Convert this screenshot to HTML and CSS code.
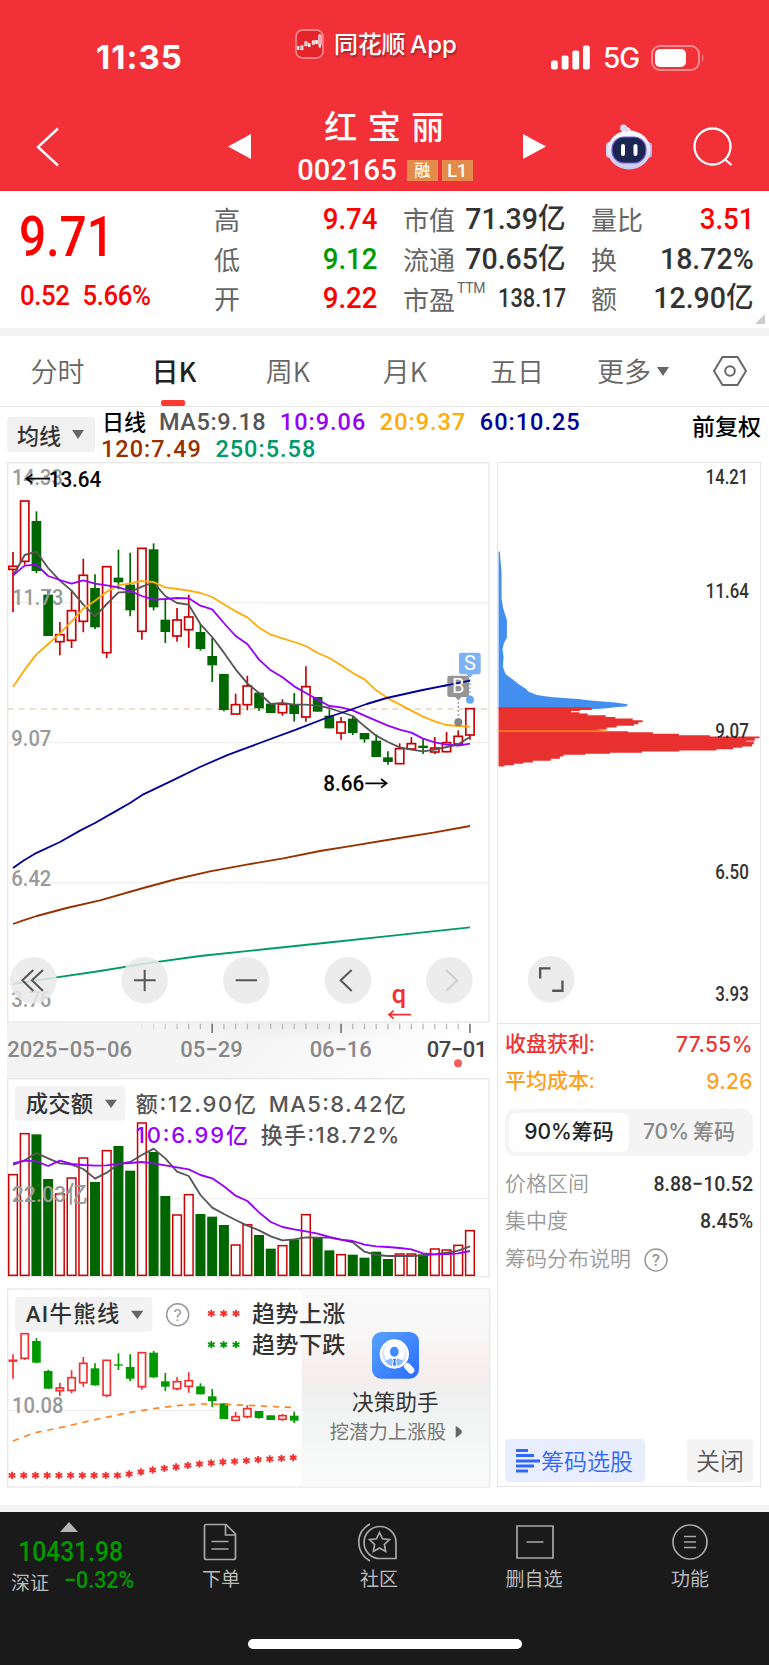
FILE: index.html
```html
<!DOCTYPE html>
<html lang="zh-CN">
<head>
<meta charset="utf-8">
<title>红宝丽 002165</title>
<link rel="stylesheet" href="styles.css">
</head>
<body>
<header class="top">
  <div class="status">
    <span class="clock">11:35</span>
    <div class="brand">
      <svg class="brand-icon" width="29" height="30" viewBox="0 0 29 30"><rect x="1" y="1" width="27" height="28" rx="6.5" fill="#e5232b" stroke="#fa9a9c" stroke-width="1.4"/><path d="M3.2 17v4M24.800 5.500v13" stroke="#fff" stroke-width="2"/><g fill="#e5232b" stroke="#fff" stroke-width="1.200"><rect x="6" y="17" width="1.800" height="3.500"/><rect x="10" y="13" width="1.800" height="3.500"/><rect x="17.500" y="12" width="1.800" height="3"/><rect x="24" y="6" width="2" height="10" rx="1"/></g><path d="M14.200 14v4M21.500 11v4" stroke="#fff" stroke-width="2.400"/></svg>
      <span>同花顺<b>App</b></span>
    </div>
    <div class="signal">
      <svg width="39" height="25" viewBox="0 0 39 25" fill="#fff"><rect y="15.500" width="6.800" height="9" rx="2"/><rect x="10.700" y="10.500" width="6.800" height="14" rx="2"/><rect x="21.400" y="5.500" width="6.800" height="19" rx="2"/><rect x="32" y=".5" width="6.800" height="24" rx="2"/></svg>
      <span>5G</span>
      <svg width="54" height="26" viewBox="0 0 54 26"><rect x="1" y="1" width="47" height="24" rx="8" fill="none" stroke="#f98b8f" stroke-width="2"/><rect x="4" y="4" width="31" height="18" rx="5" fill="#fff"/><path d="M51 9q3 4 0 8z" fill="#f98b8f"/></svg>
    </div>
  </div>
  <nav class="titlebar">
    <svg class="back" width="24" height="40" viewBox="0 0 24 40"><path d="M22 1.500 2 20l20 18.500" fill="none" stroke="#fff" stroke-width="2.400"/></svg>
    <svg class="prev" width="23" height="25" viewBox="0 0 23 25"><path d="M0 12.500 23 0v25z" fill="#fff"/></svg>
    <div class="stock">
      <h1>红宝丽</h1>
      <p><span class="code">002165</span><i>融</i><i>L1</i></p>
    </div>
    <svg class="next" width="23" height="25" viewBox="0 0 23 25"><path d="M23 12.500 0 0v25z" fill="#fff"/></svg>
    <svg class="robot" width="48" height="46" viewBox="0 0 48 46"><defs><linearGradient id="rb" x2="0" y2="1"><stop stop-color="#fff"/><stop offset="1" stop-color="#c6c9f0"/></linearGradient></defs><path d="M25 9q0-5-6-5" fill="none" stroke="#e3e4fa" stroke-width="3"/><circle cx="18.500" cy="4" r="3.400" fill="#d8d9f6"/><rect x="1" y="18" width="8" height="16" rx="4" fill="#d7d5f6"/><rect x="39" y="18" width="8" height="16" rx="4" fill="#b9b5ee"/><ellipse cx="24" cy="26" rx="21.500" ry="19.500" fill="url(#rb)"/><rect x="7" y="13" width="34" height="26" rx="12" fill="#1b2550" stroke="#7d63d8" stroke-width="1.200"/><path d="M18 22v8M30.500 22v8" stroke="#fff" stroke-width="4" stroke-linecap="round"/></svg>
    <svg class="search" width="40" height="40" viewBox="0 0 40 40" fill="none" stroke="#fff" stroke-width="2.300"><circle cx="19.500" cy="19.500" r="18"/><path d="m31.500 32 7 6"/></svg>
  </nav>
</header>

<section class="quote">
  <div class="price"><strong>9.71</strong><p><span>0.52</span><span>5.66%</span></p></div>
  <dl class="c1"><dt>高</dt><dd class="up">9.74</dd><dt>低</dt><dd class="down">9.12</dd><dt>开</dt><dd class="up">9.22</dd></dl>
  <dl class="c2"><dt>市值</dt><dd>71.39<b>亿</b></dd><dt>流通</dt><dd>70.65<b>亿</b></dd><dt class="pe">市盈<sup>TTM</sup></dt><dd class="small">138.17</dd></dl>
  <dl class="c3"><dt>量比</dt><dd class="up">3.51</dd><dt>换</dt><dd>18.72%</dd><dt>额</dt><dd>12.90<b>亿</b></dd></dl>
  <span class="corner"></span>
</section>

<nav class="tabs">
  <span>分时</span><span class="on">日K</span><span>周K</span><span>月K</span><span>五日</span><span class="more">更多<i class="caret"></i></span>
  <svg width="34" height="30" viewBox="0 0 34 30" fill="none" stroke="#666" stroke-width="2"><path d="M9.500 1h15L33 15l-8.500 14h-15L1 15z"/><circle cx="17" cy="15" r="4.800"/></svg>
</nav>

<section class="legend">
  <button class="picker">均线<i class="caret"></i></button>
  <p><span class="k">日线</span><span class="m5">MA5:9.18</span><span class="m10">10:9.06</span><span class="m20">20:9.37</span><span class="m60">60:10.25</span><br><span class="m120">120:7.49</span><span class="m250">250:5.58</span></p>
  <span class="adj">前复权</span>
</section>

<main class="board">
  <div class="left">
    <svg id="kline" width="484" height="561" viewBox="21 20 1452 1683">
      <rect x="23" y="22" width="1444" height="1678" fill="#fff" stroke="#e8e8e8" stroke-width="4"/>
      <path d="M23 442H1467M23 862H1467M23 1282H1467" stroke="#ececec" stroke-width="3"/>
      <path d="M23 761H1467" stroke="#dcc09a" stroke-width="3" stroke-dasharray="18 15"/>
      <g class="candles"></g>
      <g class="lines"></g>
      <g class="axis-label"><text x="36" y="88" textLength="152">14.33</text><text x="36" y="450" textLength="154">11.73</text><text x="34" y="871" textLength="120">9.07</text><text x="34" y="1293" textLength="120">6.42</text><text x="34" y="1655" textLength="120">3.76</text></g>
      <g fill="none" stroke="#000" stroke-width="5"><path d="M150 70H79M97 57 79 70l18 13M1096 984h62M1143 971l17 13-17 13"/></g>
      <g class="peak"><text x="146" y="94" textLength="158">13.64</text><text x="970" y="1008" textLength="123">8.66</text></g>
      <g fill="none" stroke-width="5" stroke-dasharray="5 7"><path d="M1410 660v64" stroke="#8dbdf5"/><path d="M1375 728v64" stroke="#999"/></g>
      <path d="M1383 592h53q6 0 6 6v53q0 6-6 6h-16l-10 10-10-10h-17q-6 0-6-6v-53q0-6 6-6z" fill="#7db2f3"/>
      <path d="M1348 661h53q6 0 6 6v52q0 6-6 6h-16l-10 10-10-10h-17q-6 0-6-6v-52q0-6 6-6z" fill="#8f8f8f" fill-opacity=".95"/>
      <path d="M1330 692 1410 676" stroke="#000099" stroke-width="5"/>
      <circle cx="1410" cy="733" r="12" fill="#67a6f0"/><circle cx="1375" cy="801" r="12" fill="#858585"/>
      <g class="mark"><text x="1410" y="645">S</text><text x="1375" y="713">B</text></g>
      <g class="rounds" fill="#e9e9e9" fill-opacity=".86"><circle cx="100" cy="1575" r="70"/><circle cx="434" cy="1575" r="70"/><circle cx="739" cy="1575" r="70"/><circle cx="1044" cy="1575" r="70"/><circle cx="1348" cy="1575" r="70"/></g>
      <g fill="none" stroke="#555" stroke-width="6"><path d="m100 1544-33 31 33 32M129 1544l-33 31 33 32M402 1575h65M434 1543v65M707 1575h64M1055 1544l-33 31 33 32"/><path d="m1338 1544 34 31-34 32" stroke="#cfcfcf"/></g>
      <text class="q" x="1175" y="1643">q</text><path d="M1233 1678h-66M1181 1666l-14 12 14 12" fill="none" stroke="#f23030" stroke-width="5"/>
    </svg>
    <svg id="dates" width="484" height="55" viewBox="21 728 1452 165">
      <defs><linearGradient id="strip" x2="1" y2=".12"><stop offset="0" stop-color="#f3f3f3"/><stop offset=".55" stop-color="#f5f5f5"/><stop offset="1" stop-color="#fff"/></linearGradient><radialGradient id="shade" cx=".5" cy="0" r=".5"><stop stop-color="#e6e6e6" stop-opacity=".8"/><stop offset="1" stop-color="#f3f3f3" stop-opacity="0"/></radialGradient></defs>
      <rect x="21" y="728" width="1448" height="165" fill="url(#strip)"/><rect x="430" y="728" width="900" height="120" fill="url(#shade)"/>
      <g class="ticks"></g>
      <g class="date"><text x="22" y="830" textLength="374">2025−05−06</text><text x="541" y="830" textLength="187">05−29</text><text x="929" y="830" textLength="186">06−16</text><text class="now" x="1280" y="830" textLength="182">07−01</text></g>
      <circle cx="1374" cy="849" r="12" fill="#f55c5c"/>
    </svg>
    <svg id="volume" width="484" height="200" viewBox="21 9 1452 600">
      <rect x="23" y="11" width="1444" height="594" fill="#fff" stroke="#e8e8e8" stroke-width="4"/>
      <path d="M23 371H1467" stroke="#ececec" stroke-width="3"/>
      <g class="bars"></g>
      <g class="axis-label"><text x="35" y="380" textLength="228">22.03亿</text></g>
      <g class="lines"></g>
      <rect x="45" y="33" width="332" height="104" rx="12" fill="#f2f2f2"/><text class="pick" x="77" y="110" textLength="202">成交额</text><path d="M315 74h36l-18 25z" fill="#666"/>
      <g class="vt"><text x="407" y="110" textLength="361">额:12.90亿</text><text x="806" y="110" textLength="412">MA5:8.42亿</text><text x="407" y="205" textLength="337" class="p">10:6.99亿</text><text x="782" y="205" textLength="416">换手:18.72%</text></g>
    </svg>
    <svg id="bull" width="484" height="201" viewBox="21 9 1452 603">
      <defs><linearGradient id="mist" x2="0" y2="1"><stop stop-color="#fafafa"/><stop offset=".22" stop-color="#f8f7f7"/><stop offset=".4" stop-color="#f7eeee"/><stop offset=".5" stop-color="#f1efef"/><stop offset=".62" stop-color="#eff3f2"/><stop offset=".85" stop-color="#f8f9f9"/><stop offset="1" stop-color="#fafafa"/></linearGradient><linearGradient id="blue" x2="1" y2="1"><stop stop-color="#58a3ff"/><stop offset="1" stop-color="#2b6cff"/></linearGradient></defs>
      <rect x="23" y="12" width="1446" height="594" fill="#fff" stroke="#e8e8e8" stroke-width="4"/>
      <path d="M23 376H905" stroke="#ececec" stroke-width="3"/>
      <g class="candles"></g><g class="axis-label"><text x="36" y="384" textLength="154">10.08</text></g>
      <path d="M39 468 105 443 180 428 285 404 390 382 460 371 530 362 600 357 670 358 740 361 810 364 887 368" fill="none" stroke="#ff8426" stroke-width="5" stroke-dasharray="19 17"/>
      <g class="stars"></g>
      <rect x="905" y="14" width="562" height="590" fill="url(#mist)"/>
      <rect x="45" y="36" width="412" height="104" rx="12" fill="#f2f2f2"/><text class="pick" x="77" y="112" textLength="281">AI牛熊线</text><path d="M393 77h37l-18 25z" fill="#666"/>
      <circle cx="533" cy="89" r="33" fill="none" stroke="#999" stroke-width="4.500"/><text class="ask" x="533" y="107">?</text>
      <g class="trend"><text x="756" y="111" textLength="280">趋势上涨</text><text x="756" y="205" textLength="280">趋势下跌</text></g>
      <rect x="1116" y="141" width="141" height="140" rx="28" fill="url(#blue)"/><circle cx="1183" cy="207" r="40" fill="#cfe2ff" stroke="#fff" stroke-width="8"/><circle cx="1184" cy="202" r="32" fill="#fff"/><path d="M1155 228q28-18 56 0-12 17-28 17t-28-17z" fill="#8dbcff"/><ellipse cx="1183" cy="200" rx="13" ry="15" fill="#3f8bff"/><path d="M1176 220h15l-4 7 3 16h-13l3-16z" fill="#2f78fa" stroke="#fff" stroke-width="3"/><path d="m1222 244 11 12" stroke="#fff" stroke-width="20" stroke-linecap="round"/>
      <text class="help" x="1056" y="376" textLength="260">决策助手</text><text class="sub" x="989" y="461" textLength="349">挖潜力上涨股</text><path d="M1367 422q19 12 19 18t-19 18z" fill="#666"/>
    </svg>
  </div>
  <aside class="right">
    <svg id="chips" width="262" height="561" viewBox="24 23 786 1683">
      <path d="M25 289h4l2 31 3 30v80l5 30 11 35v53l-9 17-4 18 3 22-2 30 8 22 39 30 23 15 6 8 26 10 25 4 25 3 75 5 35 5 76 6 36 5v6l-36 3-35 4-37 2H25z" fill="#438ff0"/>
      <path d="M25 757H305v8h-35v3h-27v4h25v4h25v5h54v5h29v5h52v5h30v6h-13v6h-13v5h-52v5h-30v6h-34l40 5h58v3h75v5h78v4h93v4H809v5h-14v8h-26v2h23v8h-5v7h-30v4h-27v4h-50v4H568v3H456v4h-96v3h-74v3h-66v5h-11v7h-27v6h-54v5h-29v4H71v4H43v4H25z" fill="#e8302f"/>
      <path d="M25 829H356" stroke="#ff9d0a" stroke-width="4"/>
      <g class="chip-label"><text x="648" y="85" textLength="127">14.21</text><text x="648" y="430" textLength="129">11.64</text><text x="676" y="850" textLength="101">9.07</text><text x="676" y="1273" textLength="101">6.50</text><text x="676" y="1640" textLength="101">3.93</text></g>
      <circle cx="183" cy="1575" r="70" fill="#ececec"/><path d="M150 1572v-30h31M186 1609h31v-31" fill="none" stroke="#555" stroke-width="7"/>
    </svg>
    <div class="info">
      <div class="row win"><span>收盘获利:</span><b>77.55%</b></div>
      <div class="row cost"><span>平均成本:</span><b>9.26</b></div>
      <div class="toggle"><span class="sel">90%筹码</span><span>70%<em>筹码</em></span></div>
      <div class="row grey"><span>价格区间</span><b>8.88−10.52</b></div>
      <div class="row grey"><span>集中度</span><b>8.45%</b></div>
      <div class="row grey note"><span>筹码分布说明</span><svg width="24" height="24" viewBox="0 0 24 24"><circle cx="12" cy="12" r="11" fill="none" stroke="#999" stroke-width="1.500"/><text x="12" y="18" text-anchor="middle">?</text></svg></div>
    </div>
    <div class="actions">
      <button class="pickstock"><svg width="24" height="24" viewBox="0 0 24 24" fill="#3266fa"><path d="M0 0h12v3H0zM0 5h18v3H0zM0 10.500h24v3H0zM0 15.500h18v3H0zM0 20.500h12v3H0z"/></svg>筹码选股</button>
      <button class="close">关闭</button>
    </div>
  </aside>
</main>

<footer class="bottom">
  <div class="bar">
    <div class="index"><i class="tri"></i><strong>10431.98</strong><p><span>深证</span><b>−0.32%</b></p></div>
    <div class="item a"><svg width="34" height="38" viewBox="0 0 34 38"><path d="M3 1.500h20l9.500 9.500v23.500q0 2-2 2H3.500q-2 0-2-2V3.500q0-2 1.500-2zM22.500 1.500V12h10M8.500 18.500h17M8.500 26h17"/></svg><span>下单</span></div>
    <div class="item b"><svg width="41" height="39" viewBox="0 0 41 39"><path d="M13 1C-2 9-2 29 13 38M39 35.500H23A16 16 0 1 1 39 19.500z"/><path d="m22.500 9.500 3 6.300 6.900.9-5 4.800 1.200 6.900-6.100-3.400-6.100 3.400 1.200-6.900-5-4.800 6.900-.9z"/></svg><span>社区</span></div>
    <div class="item c"><svg width="38" height="38" viewBox="0 0 38 38"><path d="M1 3h36v32H1zM10.500 19h17"/></svg><span>删自选</span></div>
    <div class="item d"><svg width="38" height="38" viewBox="0 0 38 38"><circle cx="19" cy="19" r="17"/><path d="M13 13.500h12M13 19h12M13 24.500h12"/></svg><span>功能</span></div>
  </div>
  <div class="home"></div>
</footer>
<script src="chart.js"></script>
</body>
</html>
```

FILE: styles.css
```css
* { box-sizing: border-box; }
body { margin: 0; width: 769px; background: #fff; font-family: Roboto, "Noto Sans CJK SC", sans-serif; color: #333; }
h1, p, dl, dd { margin: 0; }
i, em { font-style: normal; }
svg { display: block; flex: none; }
button { border: 0; font: inherit; color: inherit; margin: 0; }

.top { height: 191px; background: #f23038; color: #fff; }
.status { height: 100px; display: flex; align-items: flex-start; }
.clock { width: 199px; margin-left: 96px; padding-top: 38px; font: 700 33px/39px Inter, sans-serif; letter-spacing: 1px; }
.brand { width: 256px; padding-top: 29px; display: flex; gap: 11px; font: 500 24px/32px "Noto Sans CJK SC", sans-serif; text-shadow: 1px 2px 2px #0005; white-space: nowrap; letter-spacing: -.3px; }
.brand > span { margin: -2px 0 0 -1px; }
.brand b { font: 500 24px/32px Inter, sans-serif; margin-left: 5px; letter-spacing: 0; }
.signal { display: flex; padding-top: 45px; }
.signal span { font: 500 28px/26px Inter, sans-serif; width: 48px; margin-left: 13px; letter-spacing: -1px; }
.titlebar { display: flex; align-items: flex-start; height: 91px; }
.back { margin: 27px 0 0 36px; }
.prev { margin: 34px 0 0 168px; }
.stock { width: 272px; display: flex; flex-direction: column; align-items: center; padding-right: 4px; }
.stock h1 { font: 500 33px/40px "Noto Sans CJK SC", sans-serif; letter-spacing: 10.500px; margin: 5px 0 0 9px; }
.stock p { display: flex; align-items: center; height: 28px; margin-top: 11px; }
.code { font-size: 29px; font-weight: 500; letter-spacing: .1px; margin-right: 10px; }
.stock i { width: 31px; height: 21px; background: #e28b4a; font: 500 16px/21px Roboto, "Noto Sans CJK SC", sans-serif; text-align: center; }
.stock i + i { margin-left: 4px; font-size: 18px; }
.next { margin-top: 34px; }
.robot { margin: 24px 0 0 59px; }
.search { margin: 27px 0 0 40px; }

.quote { height: 145px; border-bottom: 8px solid #f4f4f4; display: flex; position: relative; }
.price { width: 214px; padding: 14px 0 0 19px; color: #f00; font-weight: 500; }
.price strong { display: block; font-size: 55px; line-height: 64px; font-weight: 500; transform: scaleX(.87); transform-origin: 0 0; }
.price p { display: flex; gap: 14px; margin: 11px 0 0 1px; font-size: 28px; line-height: 32px; transform: scaleX(.92); transform-origin: 0 0; letter-spacing: -.4px; }
dl { display: grid; grid-template-columns: auto 1fr; grid-auto-rows: 39.500px; padding-top: 8px; align-items: center; font-weight: 500; }
dt { font: 400 26px/39px "Noto Sans CJK SC", sans-serif; color: #666; white-space: nowrap; }
dd { font-size: 30px; justify-self: end; white-space: nowrap; transform: scaleX(.95); transform-origin: 100% 0; }
dd b { font: 500 29px/30px "Noto Sans CJK SC", sans-serif; }
dd.small { font-size: 26px; transform: scaleX(.84); }
dd.up, dd.down { transform: scaleX(.92); }
.c1 { width: 163px; } .c2 { width: 163px; margin-left: 26px; } .c3 { width: 163px; margin-left: 25px; }
.pe { position: relative; top: 1px; }
.pe sup { position: absolute; left: 54px; top: -1px; font: 400 14px/20px Roboto, sans-serif; letter-spacing: -.3px; }
.up { color: #f00; } .down { color: #009a00; }
.corner { position: absolute; right: 4px; bottom: 4px; border-left: 10px solid transparent; border-bottom: 10px solid #ccc; }

.tabs { height: 71px; border-bottom: 1px solid #e8e8e8; display: grid; grid-template-columns: 115px 120px 106px 128px 96px 104px 1fr; align-items: center; font: 350 27px/70px "Noto Sans CJK SC", sans-serif; color: #666; text-align: center; }
.tabs svg { margin: 0 0 1px 44px; }
.tabs .on { color: #222; font-weight: 500; position: relative; left: -1px; }
.tabs .on::after { content: ""; position: absolute; left: 47px; bottom: 0; width: 24px; height: 6px; border-radius: 2px; background: #fd3b34; }
.tabs .more { display: flex; align-items: center; justify-content: flex-end; }
.caret { border: 6px solid transparent; border-top: 9px solid #666; border-bottom: 0; margin-left: 6px; }

.legend { height: 55px; display: flex; align-items: flex-start; padding-left: 7px; }
.picker { width: 88px; height: 35px; margin-top: 10px; border-radius: 4px; background: #f1f1f1; font: 500 22px/32px "Noto Sans CJK SC", sans-serif; display: flex; align-items: center; padding: 0 0 2px 10px; }
.picker .caret { margin: 2px 0 0 11px; }
.legend p { width: 597px; padding: 0 0 0 6px; font: 500 23.500px/27px Roboto, "Noto Sans CJK SC", sans-serif; letter-spacing: 1px; white-space: nowrap; }
.legend p span { margin-right: 13.500px; }
.legend .k { color: #000; font: 500 22px/27px "Noto Sans CJK SC", sans-serif; margin: 0 13px 0 1px; letter-spacing: 0; }
.legend p .m5 { color: #555; letter-spacing: .6px; } .m10 { color: #9600ff; } .m20 { color: #ffab09; } .m60 { color: #000099; } .m120 { color: #993000; } .m250 { color: #009a66; }
.adj { font: 500 23px/30px "Noto Sans CJK SC", sans-serif; color: #000; padding-top: 3px; white-space: nowrap; }

.board { height: 1043px; display: flex; padding-left: 7px; }
.left { width: 484px; display: flex; flex-direction: column; margin-right: 6px; }
#volume { margin-top: 0; } #bull { margin-top: 10px; }
.right { width: 264px; height: 1025px; border: 1px solid #e6e6e6; display: flex; flex-direction: column; }
#chips { border-bottom: 1px solid #e6e6e6; }
svg text { font-family: Roboto, "Noto Sans CJK SC", sans-serif; }
.axis-label { font-size: 67px; fill: #999; font-weight: 500; }
.peak { font-size: 66px; fill: #000; font-weight: 500; }
.mark { font-size: 60px; fill: #fff; text-anchor: middle; }
.q { font-size: 76px; font-weight: 500; fill: #f23030; }
.date { font-size: 66px; fill: #888; font-weight: 500; } .date .now { fill: #444; }
.pick { font-size: 67px; font-weight: 500; fill: #333; }
.vt { font-size: 66px; fill: #555; font-weight: 500; } .vt text { font-family: Inter, "Noto Sans CJK SC", sans-serif; } .vt .p { fill: #9600ff; }
.ask { font-size: 52px; text-anchor: middle; fill: #999; }
.trend { font-size: 69px; fill: #333; font-weight: 500; }
.help { font-size: 65px; fill: #333; } .sub { font-size: 58px; fill: #777; }
.chip-label { font-size: 58px; fill: #333; font-weight: 500; }

.info { padding: 2px 7px 0 7px; flex: 1; }
.row { display: flex; justify-content: space-between; align-items: center; height: 37px; font: 500 21px/37px Roboto, "Noto Sans CJK SC", sans-serif; white-space: nowrap; }
.row b { font-weight: 500; }
.win { color: #ee3335; } .cost { color: #ffa11f; }
.win b, .cost b { font-family: Inter, sans-serif; letter-spacing: .4px; }
.toggle { margin: 9px 0 10px; height: 47px; border-radius: 10px; background: #f4f4f4; padding: 4px; display: flex; font: 500 21px/38px Inter, "Noto Sans CJK SC", sans-serif; color: #888; }
.toggle span { width: 120px; text-align: center; white-space: nowrap; }
.toggle em { margin-left: 4px; }
.toggle .sel { background: #fff; color: #222; border-radius: 7px; }
.grey span { color: #999; font-weight: 350; } .grey b { color: #333; transform: scaleX(.93); transform-origin: 100% 0; }
.note { justify-content: flex-start; gap: 13px; padding-top: 1px; height: 38px; }
.note text { font-size: 17px; fill: #999; }
.actions { display: flex; justify-content: space-between; padding: 0 7px 4px; height: 47px; }
.pickstock { width: 140px; background: #e8eeff; color: #3266fa; border-radius: 4px; display: flex; align-items: center; gap: 1px; padding: 0 0 2px 11px; font: 350 23px/40px "Noto Sans CJK SC", sans-serif; white-space: nowrap; }
.pickstock svg { margin-top: 2px; }
.close { width: 66px; padding: 0 0 2px; background: #f4f4f4; color: #555; border-radius: 4px; font: 350 24px/40px "Noto Sans CJK SC", sans-serif; }

.bottom { height: 160px; border-top: 7px solid #f4f4f4; background: #1a1a1a; color: #bbb; }
.bar { height: 127px; display: flex; align-items: flex-start; }
.index { width: 141px; padding-top: 10px; display: flex; flex-direction: column; align-items: center; }
.tri { border: 9px solid transparent; border-bottom: 10px solid #b5b5b5; border-top: 0; margin-right: 3px; }
.index strong { font: 500 28px/34px Roboto, sans-serif; color: #009a00; transform: scaleX(.88); margin-top: 3px; }
.index p { display: flex; gap: 15px; height: 24px; width: 123px; margin-left: 4px; align-items: center; font-size: 19px; white-space: nowrap; }
.index b { font: 500 23px/24px Roboto, sans-serif; transform: scaleX(.93); transform-origin: 0 0; color: #009a00; }
.item { display: flex; flex-direction: column; align-items: center; padding-top: 11px; width: 60px; }
.item svg { fill: none; stroke: #a8a8a8; stroke-width: 1.700; }
.item span { font: 400 19px/28px "Noto Sans CJK SC", sans-serif; margin-top: 3px; white-space: nowrap; }
.a { margin-left: 50px; } .a svg { margin-right: 3px; }
.b { margin-left: 98px; } .b svg { margin: 0 3px -1px 0; }
.c { margin-left: 95px; } .c svg { margin-left: 2px; }
.d { margin-left: 96px; }
.home { width: 274px; height: 10px; border-radius: 5px; background: #fff; margin-left: 248px; }
```

FILE: chart.js
```js
const STEP = 35.15;
const x = i => 39 + STEP * i;
const into = (sel, markup) => { document.querySelector(sel).innerHTML = markup; };

// colour, body top, body bottom, wick top, wick bottom
const k = [
  ['r',333,342,290,470],['r',137,318,137,328],['g',197,347,168,353],['g',418,542,405,542],['r',538,559,500,600],
  ['r',466,555,405,578],['r',360,498,310,531],['g',398,516,357,521],['r',334,592,333,608],['g',367,381,283,402],
  ['g',388,465,292,483],['r',279,528,279,553],['g',282,456,264,465],['g',493,530,428,563],['r',494,542,458,559],
  ['r',485,523,418,577],['g',530,581,507,586],['g',602,630,548,680],['g',656,764,655,768],['r',748,776,715,776],
  ['r',692,748,661,765],['g',712,759,712,767],['g',745,773,745,773],['r',747,772,732,781],['g',748,776,713,799],
  ['r',694,785,633,799],['g',725,769,725,769],['g',781,819,762,819],['r',800,833,785,853],['g',790,833,785,839],
  ['g',833,852,833,862],['g',856,905,837,905],['g',906,920,888,928],['r',880,925,864,925],['r',865,881,845,881],
  ['g',871,878,849,896],['r',878,890,845,896],['r',862,889,830,891],['r',843,866,825,866],['r',760,839,760,853]
];
const ai = [
  ['r',226,228,208,281],['r',146,220,146,225],['g',168,233,159,235],['g',258,311,254,311],['r',309,317,293,333],
  ['r',278,316,256,325],['r',235,293,216,305],['g',250,301,235,302],['r',226,331,226,337],['g',238,242,205,255],
  ['g',246,281,208,288],['r',203,305,203,314],['g',203,277,198,279],['g',289,305,264,318],['r',290,311,277,316],
  ['r',287,304,262,323],['g',304,328,295,328],['g',334,348,312,366],['g',355,402,355,402],['r',395,406,381,406],
  ['r',371,395,361,400],['g',378,399,378,401],['g',391,405,391,405],['r',392,403,387,407],['g',392,407,380,414]
];
const candles = (data, red, green, half) => data.map(([c, t, b, wt, wb], i) => {
  const col = c === 'r' ? red : green;
  const wick = c === 'r' ? `M${x(i)} ${wt}V${t}M${x(i)} ${b}V${wb}` : `M${x(i)} ${wt}V${wb}`;
  const body = c === 'r'
    ? `<rect x="${x(i) - half + 2}" y="${t}" width="${2 * half - 4}" height="${b - t}" fill="#fff" stroke="${col}" stroke-width="5"/>`
    : `<rect x="${x(i) - half}" y="${t}" width="${2 * half}" height="${b - t}" fill="${col}"/>`;
  return `<path d="${wick}" stroke="${col}" stroke-width="5"/>${body}`;
}).join('');
into('#kline .candles', candles(k, '#cc0000', '#006600', 14.5));
into('#bull .candles', candles(ai, '#f2302f', '#009a00', 13));

const path = (pts, col, w = 5.5) => `<path d="M${pts.map(p => p.join(' ')).join('L')}" fill="none" stroke="${col}" stroke-width="${w}" stroke-linejoin="round"/>`;
const series = (ys, col) => path(ys.map((y, i) => [x(i), y]), col);
const ma5 = [362,299,289,338,376,406,448,483,446,411,410,394,382,422,443,448,507,545,592,642,684,713,746,743,748,748,751,758,770,782,813,841,860,876,883,888,883,875,867,845];
const ma10 = [360,331,328,362,374,385,375,385,390,396,407,422,433,431,428,429,451,462,503,542,566,613,645,666,693,713,733,752,756,765,781,796,811,823,832,850,861,868,871,865];
const ma20 = [695,643,597,566,534,498,460,436,409,390,384,377,380,396,401,406,413,425,447,468,486,517,538,549,560,572,593,608,630,653,672,705,729,747,766,784,798,809,812,814];
const ma60 = [[39,1238],[72,1215],[105,1195],[180,1160],[240,1126],[285,1103],[350,1066],[390,1043],[430,1017],[518,975],[600,935],[680,900],[720,885],[890,822],[986,785],[1050,764],[1100,746],[1160,728],[1268,704],[1410,676]];
const ma120 = [[39,1406],[70,1395],[110,1382],[200,1358],[300,1335],[430,1298],[530,1271],[630,1248],[740,1228],[850,1209],[960,1187],[1060,1171],[1180,1151],[1300,1132],[1410,1112]];
const ma250 = [[39,1586],[170,1566],[300,1547],[440,1524],[600,1502],[800,1481],[1000,1460],[1150,1444],[1410,1416]];
into('#kline .lines', series(ma5, '#555') + series(ma20, '#ffab09') + series(ma10, '#9600ff') + path(ma60, '#000099') + path(ma120, '#993000') + path(ma250, '#009a66'));

const vol = 'r297 r174 g178 g312 r355 r307 r247 g321 r225 g213 g287 r142 g231 g363 r418 r357 g417 g425 g450 r508 r447 g480 g521 r510 g494 r417 g487 g526 r537 g539 g548 g530 g552 r535 r535 g538 r520 r523 r509 r465'.split(' ');
into('#volume .bars', vol.map((v, i) => {
  const y = +v.slice(1);
  return v[0] === 'r'
    ? `<rect x="${x(i) - 13}" y="${y + 2}" width="26" height="${599 - y}" fill="#fff" stroke="#cc0000" stroke-width="4.500"/>`
    : `<rect x="${x(i) - 15}" y="${y}" width="30" height="${603 - y}" fill="#006600"/>`;
}).join(''));
const v5 = [270,256,234,250,265,269,282,311,293,267,261,240,221,250,290,303,360,398,417,435,452,466,484,496,493,487,488,488,494,502,530,540,543,543,543,541,538,533,527,514];
const v10 = [265,257,259,273,257,267,270,272,271,266,264,261,265,271,277,283,300,310,334,362,378,412,441,456,463,469,476,486,494,498,509,514,516,519,523,535,538,537,535,528];
into('#volume .lines', series(v5, '#555') + series(v10, '#9600ff'));

const star = (cx, cy, col) => `<path d="M${cx} ${cy - 11}v22M${cx - 10} ${cy - 5.5}l20 11M${cx + 10} ${cy - 5.5}l-20 11" stroke="${col}" stroke-width="5.500"/>`;
const sy = [571,571,571,571,571,571,571,571,571,571,567,561,555,550,546,541,537,534,531,529,527,524,522,520,518];
into('#bull .stars', sy.map((y, i) => star(x(i) - 3, y, '#f2302f')).join('') +
  [634, 671, 708].map(cx => star(cx, 85, '#f2302f') + star(cx, 179, '#009a00')).join(''));

let ticks = '';
for (let i = 11; i < 40; i++) {
  const major = i === 17 || i === 28 || i === 39;
  ticks += `<path d="M${x(i)} 730v${major ? 28 : 17}" stroke="${major ? '#777' : '#bbb'}" stroke-width="${major ? 5 : 4}" opacity="${Math.min(1, (i - 10) / 5)}"/>`;
}
into('#dates .ticks', ticks);

// Price scales use condensed digits rather than tight tracking
document.querySelectorAll('.axis-label text, .peak text, .chip-label text').forEach(t => t.setAttribute('lengthAdjust', 'spacingAndGlyphs'));
```
